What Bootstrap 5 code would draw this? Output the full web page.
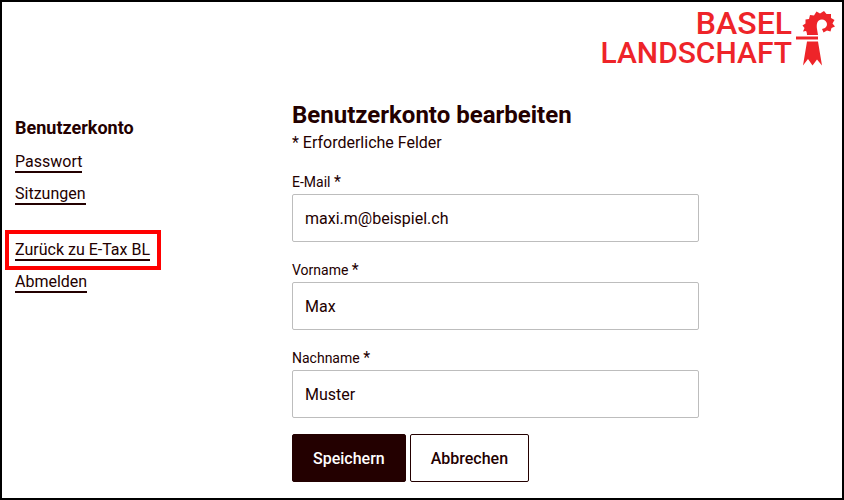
<!DOCTYPE html>
<html lang="de">
<head>
<meta charset="utf-8">
<meta name="viewport" content="width=device-width, initial-scale=1">
<title>Benutzerkonto bearbeiten</title>
<link href="https://cdn.jsdelivr.net/npm/bootstrap@5.3.0/dist/css/bootstrap.min.css" rel="stylesheet">
<style>
body { font-family: Roboto, "Liberation Sans", sans-serif; font-size: 16px; line-height: 24px; color: #230000; background: #fff; }
.page-frame { border: 2px solid #000; }
.page-header { height: 97px; padding: 6px 5px 0 0; }
.brand { color: #ee2429; gap: 4px; }
.brand:hover { color: #ee2429; }
.brand-name { font-size: 30px; line-height: 30px; font-weight: 500; }
.brand-top { font-size: 32px; }
.brand-staff { margin-top: 3px; }
.page-body { padding: 0 4px 16px 13px; }
.side-title { font-size: 18px; line-height: 24px; font-weight: 700; margin: 17px 0 8px; }
.side-list li { height: 32px; padding-top: 5px; }
.side-list + .side-list { margin-top: 24px; }
.side-link { display: inline-block; line-height: 18px; color: #230000; text-decoration: none; border-bottom: 2px solid #230000; vertical-align: top; }
.highlighted::after { content: ""; position: absolute; inset: -11px -11px -11px -10px; border: 4px solid #f00; pointer-events: none; }
.page-title { font-size: 24px; line-height: 32px; font-weight: 700; }
.field-group { margin-bottom: 17px; }
.form-label { font-size: 14px; line-height: 23px; }
.required-mark { font-size: 16px; line-height: 16px; }
.form-control { height: 48px; padding: 0 12px; color: #230000; border: 1px solid #bdbdbd; border-radius: 2px; }
.form-control:focus { color: #230000; border-color: #230000; box-shadow: none; }
.btn { --bs-btn-padding-x: 20px; --bs-btn-font-weight: 500; --bs-btn-border-radius: 2px; --bs-btn-border-color: #230000; --bs-btn-hover-border-color: #230000; padding-top: 12px; padding-bottom: 10px; line-height: 24px; }
.btn-save { --bs-btn-bg: #230000; --bs-btn-color: #fff; --bs-btn-hover-bg: #401010; --bs-btn-hover-color: #fff; }
.btn-cancel { --bs-btn-bg: #fff; --bs-btn-color: #230000; --bs-btn-hover-bg: #f4f0f0; --bs-btn-hover-color: #230000; }
</style>
</head>
<body>
<div class="page-frame min-vh-100">
  <header class="page-header d-flex justify-content-end align-items-start">
    <a href="#" class="brand d-flex text-decoration-none">
      <span class="brand-name text-end"><span class="brand-top d-block">BASEL</span><span class="d-block">LANDSCHAFT</span></span>
      <svg class="brand-staff" width="41" height="56" viewBox="0 0 41 56" fill="currentColor" aria-hidden="true">
        <path d="M11 24C11 22 10.500 20.500 10 20L7 20.500L8.500 17L6.500 14.500L9.500 12.500L9.500 8.500L13 8L14 4L18 4.500L20.500 .500L24 2.500L28 0L30.500 3L35 3L35 7L38.500 9L36.500 12.500L39 15.500L35.500 17L34.500 20.500L31 19.500L27.500 21.500L26 18L29 17C33 14 30.500 8.500 26 8.500C20.500 8.500 20.500 14 21 18L22 24Z"/>
        <path d="M0 25.500H22V28.500H0Z"/>
        <path d="M11 30.500H22L26 54.500L21 48.500L16.500 54.500L12 48L7 54.500Z"/>
      </svg>
    </a>
  </header>
  <div class="container-fluid page-body">
    <div class="row gx-2">
      <nav class="col-4" aria-label="Benutzerkonto">
        <h2 class="side-title">Benutzerkonto</h2>
        <ul class="side-list list-unstyled mb-0">
          <li><a class="side-link" href="#">Passwort</a></li>
          <li><a class="side-link" href="#">Sitzungen</a></li>
        </ul>
        <ul class="side-list list-unstyled mb-0">
          <li><a class="side-link highlighted position-relative" href="#">Zurück zu E-Tax BL</a></li>
          <li><a class="side-link" href="#">Abmelden</a></li>
        </ul>
      </nav>
      <main class="col-6">
        <h1 class="page-title mb-0">Benutzerkonto bearbeiten</h1>
        <p class="mb-3">* Erforderliche Felder</p>
        <form>
          <div class="field-group">
            <label class="form-label d-block mb-0" for="email">E-Mail <span class="required-mark">*</span></label>
            <input class="form-control" type="email" id="email" value="maxi.m@beispiel.ch" required>
          </div>
          <div class="field-group">
            <label class="form-label d-block mb-0" for="firstName">Vorname <span class="required-mark">*</span></label>
            <input class="form-control" type="text" id="firstName" value="Max" required>
          </div>
          <div class="mb-3">
            <label class="form-label d-block mb-0" for="lastName">Nachname <span class="required-mark">*</span></label>
            <input class="form-control" type="text" id="lastName" value="Muster" required>
          </div>
          <div class="d-flex gap-1">
            <button type="submit" class="btn btn-save">Speichern</button>
            <button type="button" class="btn btn-cancel">Abbrechen</button>
          </div>
        </form>
      </main>
    </div>
  </div>
</div>
<script src="https://cdn.jsdelivr.net/npm/bootstrap@5.3.0/dist/js/bootstrap.bundle.min.js"></script>
</body>
</html>
